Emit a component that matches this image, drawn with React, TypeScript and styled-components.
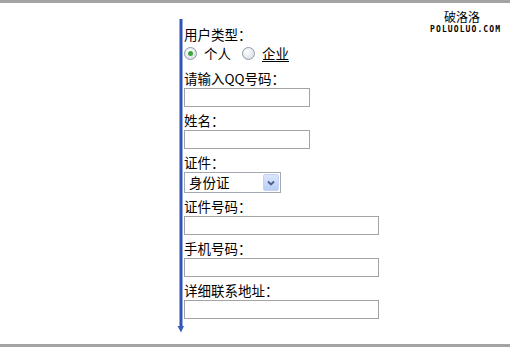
import styled, { createGlobalStyle } from 'styled-components';

const GlobalStyle = createGlobalStyle`
  html, body {
    margin: 0;
    padding: 0;
    background: #fff;
  }
  body {
    font-family: 'Noto Sans CJK SC', 'Noto Sans', sans-serif;
    color: #000;
  }
`;

const Page = styled.div`
  width: 510px;
  height: 347px;
  display: flex;
  flex-direction: column;
  background: #fff;
  overflow: hidden;
`;

const Rule = styled.div`
  height: 3px;
  flex-shrink: 0;
  background: #a4a4a4;
`;

const Stage = styled.div`
  flex: 1;
  min-height: 0;
  display: flex;
  padding-left: 177px;
`;

const Rail = styled.svg`
  flex-shrink: 0;
  margin-top: 16px;
`;

const Form = styled.div`
  display: flex;
  flex-direction: column;
  gap: 3px;
  padding-top: 21px;
  font-size: 13.5px;
`;

const Field = styled.div`
  display: flex;
  flex-direction: column;
`;

const Label = styled.div`
  height: 20px;
  line-height: 20px;
  white-space: nowrap;
`;

const RadioRow = styled.div`
  display: flex;
  align-items: center;
  height: 16px;
  margin: 1px 0 4px;
`;

const Radio = styled.span<{ $checked?: boolean }>`
  width: 11px;
  height: 11px;
  border: 1px solid #8d9cab;
  border-radius: 50%;
  background: radial-gradient(circle at 40% 35%, #ffffff 0%, #dfe3e8 70%, #cdd3da 100%);
  display: flex;
  align-items: center;
  justify-content: center;
  margin-left: ${p => (p.$checked ? '0' : '11px')};

  &::after {
    content: '';
    width: 5px;
    height: 5px;
    border-radius: 50%;
    background: ${p => (p.$checked ? '#3da33d' : 'transparent')};
  }
`;

const RadioText = styled.span<{ $link?: boolean }>`
  margin-left: 7px;
  line-height: 16px;
  text-decoration: ${p => (p.$link ? 'underline' : 'none')};
  text-underline-offset: 2px;
`;

const TextBox = styled.div<{ $wide?: boolean }>`
  box-sizing: border-box;
  width: ${p => (p.$wide ? '195px' : '126px')};
  height: 19px;
  border: 1px solid #a3a3a3;
  background: #fff;
`;

const SelectBox = styled.div`
  box-sizing: border-box;
  width: 97px;
  height: 21px;
  border: 1px solid #a3a9b1;
  display: flex;
  align-items: center;
  justify-content: space-between;
  padding: 1px 1px 1px 4px;
  background: #fff;
`;

const SelectValue = styled.span`
  line-height: 17px;
`;

const DropButton = styled.span`
  width: 16px;
  height: 17px;
  border-radius: 2px;
  background: linear-gradient(#dbe6fd, #b9cdf6);
  border: 1px solid #c4d3f5;
  box-sizing: border-box;
  display: flex;
  align-items: center;
  justify-content: center;
`;

const Logo = styled.div`
  margin-left: auto;
  padding: 7px 10px 0 0;
  display: flex;
  flex-direction: column;
  align-items: center;
`;

const LogoName = styled.div`
  font-size: 12px;
  line-height: 14px;
  padding-right: 6px;
`;

const LogoUrl = styled.div`
  margin-top: 2px;
  font-family: 'DejaVu Sans Mono', monospace;
  font-weight: bold;
  font-size: 8px;
  line-height: 8px;
  letter-spacing: 1.1px;
  margin-right: -1.1px;
`;

const fields: { label: string; kind: 'short' | 'wide' | 'select' }[] = [
  { label: '请输入QQ号码：', kind: 'short' },
  { label: '姓名：', kind: 'short' },
  { label: '证件：', kind: 'select' },
  { label: '证件号码：', kind: 'wide' },
  { label: '手机号码：', kind: 'wide' },
  { label: '详细联系地址：', kind: 'wide' },
];

export default function App() {
  return (
    <>
      <GlobalStyle />
      <Page>
        <Rule />
        <Stage>
          <Rail width="7" height="314" viewBox="0 0 7 314">
            <rect x="2.5" y="0" width="3" height="308" fill="#3153b6" />
            <polygon points="0.5,307 7,307 4,313.5" fill="#3b5cc0" />
          </Rail>
          <Form>
            <Field>
              <Label>用户类型：</Label>
              <RadioRow>
                <Radio $checked />
                <RadioText>个人</RadioText>
                <Radio />
                <RadioText $link>企业</RadioText>
              </RadioRow>
            </Field>
            {fields.map(f => (
              <Field key={f.label}>
                <Label>{f.label}</Label>
                {f.kind === 'select' ? (
                  <SelectBox>
                    <SelectValue>身份证</SelectValue>
                    <DropButton>
                      <svg width="8" height="6" viewBox="0 0 8 6">
                        <path d="M1 1.5 L4 4.5 L7 1.5" fill="none" stroke="#4d6185" strokeWidth="1.8" />
                      </svg>
                    </DropButton>
                  </SelectBox>
                ) : (
                  <TextBox $wide={f.kind === 'wide'} />
                )}
              </Field>
            ))}
          </Form>
          <Logo>
            <LogoName>破洛洛</LogoName>
            <LogoUrl>POLUOLUO.COM</LogoUrl>
          </Logo>
        </Stage>
        <Rule />
      </Page>
    </>
  );
}
